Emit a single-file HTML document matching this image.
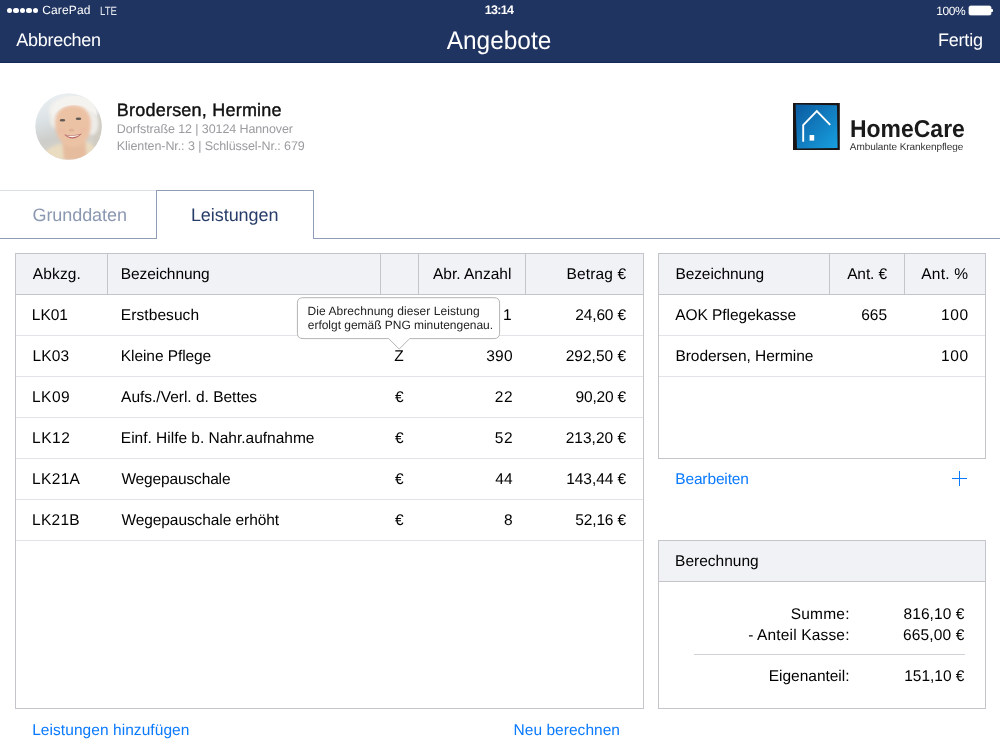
<!DOCTYPE html>
<html><head><meta charset="utf-8">
<style>
*{margin:0;padding:0;box-sizing:border-box}
html,body{width:1000px;height:750px;overflow:hidden;background:#fff;font-family:"Liberation Sans",sans-serif;position:relative}
.t{position:absolute;white-space:nowrap;line-height:1;text-rendering:geometricPrecision}
.b{position:absolute}
#w{position:absolute;left:0;top:0;width:1000px;height:750px;will-change:transform}
</style></head><body><div id="w">
<div class="b" style="left:0px;top:0px;width:1000px;height:63px;background:#1f3461;"></div>
<div class="b" style="left:0px;top:62px;width:1000px;height:1px;background:#132a5a;"></div>
<div class="b" style="left:6.95px;top:7.55px;width:5.2px;height:5.2px;border-radius:50%;background:#fff"></div>
<div class="b" style="left:13.45px;top:7.55px;width:5.2px;height:5.2px;border-radius:50%;background:#fff"></div>
<div class="b" style="left:19.95px;top:7.55px;width:5.2px;height:5.2px;border-radius:50%;background:#fff"></div>
<div class="b" style="left:26.45px;top:7.55px;width:5.2px;height:5.2px;border-radius:50%;background:#fff"></div>
<div class="b" style="left:32.95px;top:7.55px;width:5.2px;height:5.2px;border-radius:50%;background:#fff"></div>
<div class="t" style="top:4.14px;font-size:12px;color:#fff;letter-spacing:0.123px;left:42.26px;">CarePad</div>
<div class="t" style="top:4.64px;font-size:12px;color:#e8ebf2;left:99.5px;transform:scaleX(0.8);transform-origin:0 0;">LTE</div>
<div class="t" style="top:4.12px;font-size:12.5px;color:#fff;font-weight:bold;letter-spacing:-0.68px;left:199.01999999999998px;width:600px;text-align:center;">13:14</div>
<div class="t" style="top:4.64px;font-size:12px;color:#fff;letter-spacing:-0.45px;left:936.3px;">100%</div>
<div class="b" style="left:969px;top:5.5px;width:22px;height:9.3px;background:#fff;border-radius:2px;box-shadow:0 0 0 0.5px #c8cdd8;"></div>
<div class="b" style="left:991.3px;top:8.6px;width:2px;height:3.3px;background:#fff;border-radius:0 1px 1px 0;"></div>
<div class="t" style="top:30.76px;font-size:18px;color:#fff;letter-spacing:-0.287px;left:16.3px;">Abbrechen</div>
<div class="t" style="top:29.01px;font-size:25.5px;color:#fff;left:199px;width:600px;text-align:center;transform:scaleX(0.958);transform-origin:50% 0;">Angebote</div>
<div class="t" style="top:30.76px;font-size:18px;color:#fff;letter-spacing:-0.184px;right:17.039999999999964px;text-align:right;margin-right:0.184px;">Fertig</div>
<svg class="b" style="left:35px;top:93px" width="67" height="67" viewBox="0 0 67 67">
<defs><clipPath id="cc"><circle cx="33.5" cy="33.5" r="33.2"/></clipPath>
<filter id="bl" x="-30%" y="-30%" width="160%" height="160%"><feGaussianBlur stdDeviation="1.5"/></filter>
<filter id="bl2" x="-30%" y="-30%" width="160%" height="160%"><feGaussianBlur stdDeviation="0.6"/></filter>
<linearGradient id="bgG" x1="0" y1="0" x2="0.3" y2="1"><stop offset="0" stop-color="#eef2f4"/><stop offset="0.4" stop-color="#dce3e6"/><stop offset="0.7" stop-color="#cdcdca"/><stop offset="1" stop-color="#dcd6ca"/></linearGradient>
</defs>
<g clip-path="url(#cc)">
<rect width="67" height="67" fill="url(#bgG)"/>
<g filter="url(#bl)">
<rect x="58" y="22" width="10" height="40" fill="#d0ccc3"/>
<path d="M4 67 C8 58 16 53 26 51 L52 49 C58 51 62 57 64 67 Z" fill="#e9dcc0"/>
<path d="M27 47 L50 46 L52 67 L29 67 Z" fill="#e6bc9f"/>
<ellipse cx="38" cy="18" rx="24" ry="15" fill="#f4f2ee"/>
<ellipse cx="57" cy="30" rx="6.5" ry="12" fill="#eeece8"/>
<ellipse cx="20" cy="26" rx="5" ry="9" fill="#efede8"/>
<path d="M20 30 C20 18 28 12 38 12 C49 12 56 19 56 31 C56 44 49 54 38 54 C28 54 20 44 20 30 Z" fill="#ecc2a5"/>
</g>
<g filter="url(#bl2)">
<path d="M17 25 C17 10 28 3 40 3 C52 3 61 11 62 23 C57 16 49 12 39 12 C29 12 21 17 17 25 Z" fill="#f5f3ef"/>
<ellipse cx="27" cy="38" rx="4" ry="3" fill="#eab9a3" opacity="0.35"/>
<ellipse cx="48" cy="37" rx="4" ry="3" fill="#eab9a3" opacity="0.35"/>
<ellipse cx="27.5" cy="27.3" rx="2.8" ry="1.3" fill="#5e5852"/>
<ellipse cx="43.5" cy="25.8" rx="2.8" ry="1.3" fill="#5e5852"/>
<path d="M29 41.5 Q38 50 47 40.5 Q38 43.5 29 41.5 Z" fill="#b86a64"/>
<path d="M31 42.4 Q38 46.3 45.2 41.6 Q38 43.6 31 42.4 Z" fill="#fbf6f0"/>
<ellipse cx="36.5" cy="37" rx="3" ry="1.5" fill="#e0b396"/>
</g>
</g></svg>
<div class="t" style="top:100.76px;font-size:18px;color:#111;letter-spacing:0.218px;left:116.8px;-webkit-text-stroke:0.4px #111;">Brodersen, Hermine</div>
<div class="t" style="top:122.72px;font-size:12.5px;color:#9b9ba0;letter-spacing:-0.099px;left:116.8px;">Dorfstraße 12 | 30124 Hannover</div>
<div class="t" style="top:139.72px;font-size:12.5px;color:#9b9ba0;letter-spacing:-0.082px;left:116.8px;">Klienten-Nr.: 3 | Schlüssel-Nr.: 679</div>
<svg class="b" style="left:792px;top:102px" width="50" height="50" viewBox="0 0 50 50">
<defs><linearGradient id="lg" x1="0" y1="0" x2="1" y2="1"><stop offset="0" stop-color="#0c5a9f"/><stop offset="1" stop-color="#17a0e0"/></linearGradient></defs>
<rect x="1" y="1" width="46.8" height="47" fill="#1a1414"/>
<path d="M3.6 2.6 L45 3.2 L45.6 46 L5 46.6 Z" fill="url(#lg)"/>
<path d="M11.2 39.8 V23.2 L24.8 9.2 L38.2 22.8" fill="none" stroke="#fff" stroke-width="1.9"/>
<rect x="17.6" y="33" width="4.6" height="5.6" fill="#fff"/>
</svg>
<div class="t" style="top:117.86px;font-size:24.5px;color:#1a1a1a;font-weight:bold;left:850.2px;transform:scaleX(0.937);transform-origin:0 0;">HomeCare</div>
<div class="t" style="top:142.73px;font-size:10px;color:#333;letter-spacing:-0.073px;left:849.8px;">Ambulante Krankenpflege</div>
<div class="b" style="left:0px;top:190px;width:157px;height:1px;background:#dce0e7;"></div>
<div class="b" style="left:314px;top:238px;width:686px;height:1px;background:#8f9db6;"></div>
<div class="b" style="left:0px;top:238px;width:157px;height:1px;background:#8f9db6;"></div>
<div class="b" style="left:156px;top:190px;width:158px;height:49px;border:1px solid #8f9db6;border-bottom:none;background:#fff;"></div>
<div class="t" style="top:205.56px;font-size:18px;color:#8b98b1;letter-spacing:-0.069px;left:32.5px;">Grunddaten</div>
<div class="t" style="top:205.66px;font-size:18px;color:#273d69;letter-spacing:-0.051px;left:190.88px;">Leistungen</div>
<div class="b" style="left:15px;top:253px;width:629px;height:456px;border:1px solid #c3c5ca;"></div>
<div class="b" style="left:16px;top:254px;width:627px;height:40px;background:#f1f2f6;"></div>
<div class="b" style="left:16px;top:294px;width:627px;height:1px;background:#c3c5ca;"></div>
<div class="b" style="left:107px;top:254px;width:1px;height:40px;background:#c3c5ca;"></div>
<div class="b" style="left:380px;top:254px;width:1px;height:40px;background:#c3c5ca;"></div>
<div class="b" style="left:418px;top:254px;width:1px;height:40px;background:#c3c5ca;"></div>
<div class="b" style="left:525px;top:254px;width:1px;height:40px;background:#c3c5ca;"></div>
<div class="t" style="top:267.28px;font-size:15.5px;color:#000;letter-spacing:0.116px;left:32.84px;">Abkzg.</div>
<div class="t" style="top:267.28px;font-size:15.5px;color:#000;letter-spacing:-0.08px;left:120.8px;">Bezeichnung</div>
<div class="t" style="top:267.28px;font-size:15.5px;color:#000;right:488.58px;text-align:right;">Abr. Anzahl</div>
<div class="t" style="top:267.28px;font-size:15.5px;color:#000;letter-spacing:0.154px;right:373.91999999999996px;text-align:right;margin-right:-0.154px;">Betrag €</div>
<div class="t" style="top:307.78px;font-size:15.5px;color:#000;left:31.79px;">LK01</div>
<div class="t" style="top:307.78px;font-size:15.5px;color:#000;letter-spacing:0.078px;left:120.84px;">Erstbesuch</div>
<div class="t" style="top:307.78px;font-size:15.5px;color:#000;right:488.5px;text-align:right;">1</div>
<div class="t" style="top:307.78px;font-size:15.5px;color:#000;letter-spacing:-0.153px;right:373.91999999999996px;text-align:right;margin-right:0.153px;">24,60 €</div>
<div class="b" style="left:16px;top:335px;width:627px;height:1px;background:#e1e3e7;"></div>
<div class="t" style="top:348.78px;font-size:15.5px;color:#000;letter-spacing:0.2px;left:32.4px;">LK03</div>
<div class="t" style="top:348.78px;font-size:15.5px;color:#000;letter-spacing:-0.08px;left:120.84px;">Kleine Pflege</div>
<div class="t" style="top:348.78px;font-size:15.5px;color:#000;left:99.10000000000002px;width:600px;text-align:center;">Z</div>
<div class="t" style="top:348.78px;font-size:15.5px;color:#000;letter-spacing:0.25px;right:487.46000000000004px;text-align:right;margin-right:-0.25px;">390</div>
<div class="t" style="top:348.78px;font-size:15.5px;color:#000;right:373.91999999999996px;text-align:right;">292,50 €</div>
<div class="b" style="left:16px;top:376px;width:627px;height:1px;background:#e1e3e7;"></div>
<div class="t" style="top:389.78px;font-size:15.5px;color:#000;letter-spacing:0.473px;left:32.04px;">LK09</div>
<div class="t" style="top:389.78px;font-size:15.5px;color:#000;letter-spacing:-0.006px;left:121.08px;">Aufs./Verl. d. Bettes</div>
<div class="t" style="top:389.78px;font-size:15.5px;color:#000;left:99.27999999999997px;width:600px;text-align:center;">€</div>
<div class="t" style="top:389.78px;font-size:15.5px;color:#000;letter-spacing:0.66px;right:487.46000000000004px;text-align:right;margin-right:-0.66px;">22</div>
<div class="t" style="top:389.78px;font-size:15.5px;color:#000;letter-spacing:-0.203px;right:373.91999999999996px;text-align:right;margin-right:0.203px;">90,20 €</div>
<div class="b" style="left:16px;top:417px;width:627px;height:1px;background:#e1e3e7;"></div>
<div class="t" style="top:430.78px;font-size:15.5px;color:#000;letter-spacing:0.513px;left:32.04px;">LK12</div>
<div class="t" style="top:430.78px;font-size:15.5px;color:#000;letter-spacing:-0.01px;left:120.84px;">Einf. Hilfe b. Nahr.aufnahme</div>
<div class="t" style="top:430.78px;font-size:15.5px;color:#000;left:99.27999999999997px;width:600px;text-align:center;">€</div>
<div class="t" style="top:430.78px;font-size:15.5px;color:#000;letter-spacing:0.66px;right:487.46000000000004px;text-align:right;margin-right:-0.66px;">52</div>
<div class="t" style="top:430.78px;font-size:15.5px;color:#000;right:373.91999999999996px;text-align:right;">213,20 €</div>
<div class="b" style="left:16px;top:458px;width:627px;height:1px;background:#e1e3e7;"></div>
<div class="t" style="top:471.78px;font-size:15.5px;color:#000;letter-spacing:0.345px;left:32.04px;">LK21A</div>
<div class="t" style="top:471.78px;font-size:15.5px;color:#000;letter-spacing:-0.143px;left:121.38px;">Wegepauschale</div>
<div class="t" style="top:471.78px;font-size:15.5px;color:#000;left:99.27999999999997px;width:600px;text-align:center;">€</div>
<div class="t" style="top:471.78px;font-size:15.5px;color:#000;letter-spacing:-0.04px;right:487.46000000000004px;text-align:right;margin-right:0.04px;">44</div>
<div class="t" style="top:471.78px;font-size:15.5px;color:#000;letter-spacing:-0.071px;right:373.91999999999996px;text-align:right;margin-right:0.071px;">143,44 €</div>
<div class="b" style="left:16px;top:499px;width:627px;height:1px;background:#e1e3e7;"></div>
<div class="t" style="top:512.78px;font-size:15.5px;color:#000;letter-spacing:0.27px;left:32.04px;">LK21B</div>
<div class="t" style="top:512.78px;font-size:15.5px;color:#000;letter-spacing:-0.075px;left:121.38px;">Wegepauschale erhöht</div>
<div class="t" style="top:512.78px;font-size:15.5px;color:#000;left:99.27999999999997px;width:600px;text-align:center;">€</div>
<div class="t" style="top:512.78px;font-size:15.5px;color:#000;right:487.46000000000004px;text-align:right;">8</div>
<div class="t" style="top:512.78px;font-size:15.5px;color:#000;letter-spacing:-0.153px;right:373.91999999999996px;text-align:right;margin-right:0.153px;">52,16 €</div>
<div class="b" style="left:16px;top:540px;width:627px;height:1px;background:#e1e3e7;"></div>
<svg class="b" style="left:290px;top:290px" width="220" height="70" viewBox="0 0 220 70">
<path d="M12.9 7.7 H204.1 Q209.6 7.7 209.6 13.2 V43.1 Q209.6 48.6 204.1 48.6 H119.7 L109.2 59 L98.7 48.6 H12.9 Q7.4 48.6 7.4 43.1 V13.2 Q7.4 7.7 12.9 7.7 Z" fill="#fff" stroke="#b4b4b4" stroke-width="1"/>
</svg>
<div class="t" style="top:305.24px;font-size:12px;color:#222;letter-spacing:0.069px;left:307.5px;">Die Abrechnung dieser Leistung</div>
<div class="t" style="top:318.94px;font-size:12px;color:#222;letter-spacing:-0.028px;left:307.8px;">erfolgt gemäß PNG minutengenau.</div>
<div class="b" style="left:658px;top:253px;width:328px;height:206px;border:1px solid #c3c5ca;"></div>
<div class="b" style="left:659px;top:254px;width:326px;height:40px;background:#f1f2f6;"></div>
<div class="b" style="left:659px;top:294px;width:326px;height:1px;background:#c3c5ca;"></div>
<div class="b" style="left:829px;top:254px;width:1px;height:40px;background:#c3c5ca;"></div>
<div class="b" style="left:904px;top:254px;width:1px;height:40px;background:#c3c5ca;"></div>
<div class="b" style="left:659px;top:335px;width:326px;height:1px;background:#e1e3e7;"></div>
<div class="b" style="left:659px;top:376px;width:326px;height:1px;background:#e1e3e7;"></div>
<div class="t" style="top:267.28px;font-size:15.5px;color:#000;letter-spacing:-0.08px;left:675.38px;">Bezeichnung</div>
<div class="t" style="top:267.28px;font-size:15.5px;color:#000;letter-spacing:-0.1px;right:112.88px;text-align:right;margin-right:0.1px;">Ant. €</div>
<div class="t" style="top:267.28px;font-size:15.5px;color:#000;letter-spacing:0.232px;right:31.960000000000036px;text-align:right;margin-right:-0.232px;">Ant. %</div>
<div class="t" style="top:307.78px;font-size:15.5px;color:#000;letter-spacing:-0.04px;left:675.14px;">AOK Pflegekasse</div>
<div class="t" style="top:307.78px;font-size:15.5px;color:#000;letter-spacing:0.02px;right:112.88px;text-align:right;margin-right:-0.02px;">665</div>
<div class="t" style="top:307.78px;font-size:15.5px;color:#000;letter-spacing:0.62px;right:31.960000000000036px;text-align:right;margin-right:-0.62px;">100</div>
<div class="t" style="top:348.78px;font-size:15.5px;color:#000;letter-spacing:-0.04px;left:675.38px;">Brodersen, Hermine</div>
<div class="t" style="top:348.78px;font-size:15.5px;color:#000;letter-spacing:0.62px;right:31.960000000000036px;text-align:right;margin-right:-0.62px;">100</div>
<div class="t" style="top:471.88px;font-size:15.5px;color:#0a7aff;letter-spacing:-0.133px;left:675.2px;">Bearbeiten</div>
<div class="b" style="left:952px;top:477.9px;width:15px;height:1.4px;background:#0a7aff;"></div>
<div class="b" style="left:958.8px;top:471.2px;width:1.4px;height:14.5px;background:#0a7aff;"></div>
<div class="b" style="left:658px;top:540px;width:328px;height:169px;border:1px solid #c3c5ca;"></div>
<div class="b" style="left:659px;top:541px;width:326px;height:40px;background:#f1f2f6;"></div>
<div class="b" style="left:659px;top:581px;width:326px;height:1px;background:#c3c5ca;"></div>
<div class="t" style="top:554.18px;font-size:15.5px;color:#000;letter-spacing:0.009px;left:675.04px;">Berechnung</div>
<div class="t" style="top:606.63px;font-size:15.5px;color:#000;letter-spacing:0.216px;right:150.53999999999996px;text-align:right;margin-right:-0.216px;">Summe:</div>
<div class="t" style="top:606.63px;font-size:15.5px;color:#000;letter-spacing:0.094px;right:35.539999999999964px;text-align:right;margin-right:-0.094px;">816,10 €</div>
<div class="t" style="top:627.63px;font-size:15.5px;color:#000;letter-spacing:0.16px;right:150.53999999999996px;text-align:right;margin-right:-0.16px;">- Anteil Kasse:</div>
<div class="t" style="top:627.63px;font-size:15.5px;color:#000;letter-spacing:0.16px;right:35.539999999999964px;text-align:right;margin-right:-0.16px;">665,00 €</div>
<div class="b" style="left:694px;top:654px;width:271px;height:1px;background:#cfd1d6;"></div>
<div class="t" style="top:669.28px;font-size:15.5px;color:#000;letter-spacing:-0.031px;right:150.53999999999996px;text-align:right;margin-right:0.031px;">Eigenanteil:</div>
<div class="t" style="top:669.28px;font-size:15.5px;color:#000;letter-spacing:-0.017px;right:35.539999999999964px;text-align:right;margin-right:0.017px;">151,10 €</div>
<div class="t" style="top:722.88px;font-size:15.5px;color:#0a7aff;letter-spacing:0.061px;left:32.2px;">Leistungen hinzufügen</div>
<div class="t" style="top:722.78px;font-size:15.5px;color:#0a7aff;letter-spacing:0.032px;left:513.58px;">Neu berechnen</div>
</div></body></html>
